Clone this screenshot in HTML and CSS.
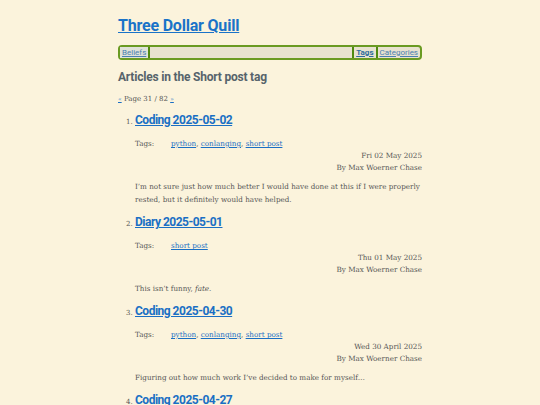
FILE: index.html
```html
<!DOCTYPE html>
<html lang="en">
<head>
    <meta charset="utf-8">
    <title>Articles in the Short post tag | Three Dollar Quill</title>
    <link rel="stylesheet" href="styles.css">
</head>
<body>
    <div class="page">
        <header>
            <h1 class="site-title"><a href="#">Three Dollar Quill</a></h1>
            <nav class="topnav">
                <a href="#" class="nav-link current">Beliefs</a>
                <span class="nav-fill"></span>
                <a href="#" class="nav-link bold">Tags</a>
                <a href="#" class="nav-link">Categories</a>
            </nav>
        </header>

        <h2 class="page-heading">Articles in the Short post tag</h2>
        <p class="pager"><a href="#">«</a> Page 31 / 82 <a href="#">»</a></p>

        <ol class="articles" start="1">
            <li>
                <h3 class="entry-title"><a href="#">Coding 2025-05-02</a></h3>
                <div class="tags"><span class="tags-label">Tags:</span><span><a href="#">python</a>, <a href="#">conlanging</a>, <a href="#">short post</a></span></div>
                <div class="meta">
                    <div>Fri 02 May 2025</div>
                    <div>By Max Woerner Chase</div>
                </div>
                <p class="summary">I’m not sure just how much better I would have done at this if I were properly rested, but it definitely would have helped.</p>
            </li>
            <li>
                <h3 class="entry-title"><a href="#">Diary 2025-05-01</a></h3>
                <div class="tags"><span class="tags-label">Tags:</span><span><a href="#">short post</a></span></div>
                <div class="meta">
                    <div>Thu 01 May 2025</div>
                    <div>By Max Woerner Chase</div>
                </div>
                <p class="summary">This isn’t funny, <em>fate</em>.</p>
            </li>
            <li>
                <h3 class="entry-title"><a href="#">Coding 2025-04-30</a></h3>
                <div class="tags"><span class="tags-label">Tags:</span><span><a href="#">python</a>, <a href="#">conlanging</a>, <a href="#">short post</a></span></div>
                <div class="meta">
                    <div>Wed 30 April 2025</div>
                    <div>By Max Woerner Chase</div>
                </div>
                <p class="summary">Figuring out how much work I’ve decided to make for myself…</p>
            </li>
            <li>
                <h3 class="entry-title"><a href="#">Coding 2025-04-27</a></h3>
                <div class="tags"><span class="tags-label">Tags:</span><span><a href="#">python</a>, <a href="#">conlanging</a>, <a href="#">short post</a></span></div>
            </li>
        </ol>
    </div>
</body>
</html>
```

FILE: styles.css
```css
body {
    margin: 0;
    background-color: #fbf3dc;
    font-family: 'DejaVu Serif', serif;
    font-size: 8px;
    color: #555;
}

a {
    color: #1a6fc4;
}

.page {
    width: 304px;
    margin: 0 auto;
    padding-top: 15px;
}

.site-title,
.topnav,
.page-heading,
.entry-title {
    font-family: 'Roboto', sans-serif;
}

.site-title {
    margin: 0;
    font-size: 16px;
    font-weight: 700;
    letter-spacing: -0.2px;
    line-height: 22px;
}

.site-title a {
    color: #1a73c8;
}

.topnav {
    display: flex;
    margin-top: 8px;
    height: 11px;
    border: 2px solid #6a9a22;
    border-radius: 4px;
    background-color: #e8e2cf;
    font-size: 8px;
    line-height: 11px;
}

.nav-link {
    padding: 0 2px;
    color: #4a7fb0;
    border-left: 2px solid #4f8a10;
}

.nav-link.current {
    border-left: none;
    background-color: #dfe2d8;
    border-right: 2px solid #4f8a10;
}

.nav-link.bold {
    font-weight: 700;
    color: #2f6c9c;
}

.nav-fill {
    flex: 1;
}

.page-heading {
    margin: 9px 0 0;
    font-size: 12px;
    font-weight: 700;
    letter-spacing: -0.2px;
    color: #56636b;
    line-height: 16px;
}

.pager {
    margin: 9px 0 0;
    font-size: 7px;
    line-height: 10px;
}

.pager a {
    font-size: 6px;
}

.articles {
    margin: 7px 0 0;
    padding-left: 17px;
    font-size: 7px;
}

.articles li {
    margin-bottom: 7px;
}

.entry-title {
    margin: 0;
    font-size: 12px;
    font-weight: 700;
    letter-spacing: -0.5px;
    line-height: 18px;
}

.tags {
    display: flex;
    margin-top: 9px;
    font-size: 7.2px;
    line-height: 12px;
}

.tags-label {
    width: 36px;
}

.meta {
    text-align: right;
    font-size: 7.2px;
    line-height: 12px;
}

.summary {
    margin: 6px 0 0;
    font-size: 7.2px;
    line-height: 13px;
}
```
